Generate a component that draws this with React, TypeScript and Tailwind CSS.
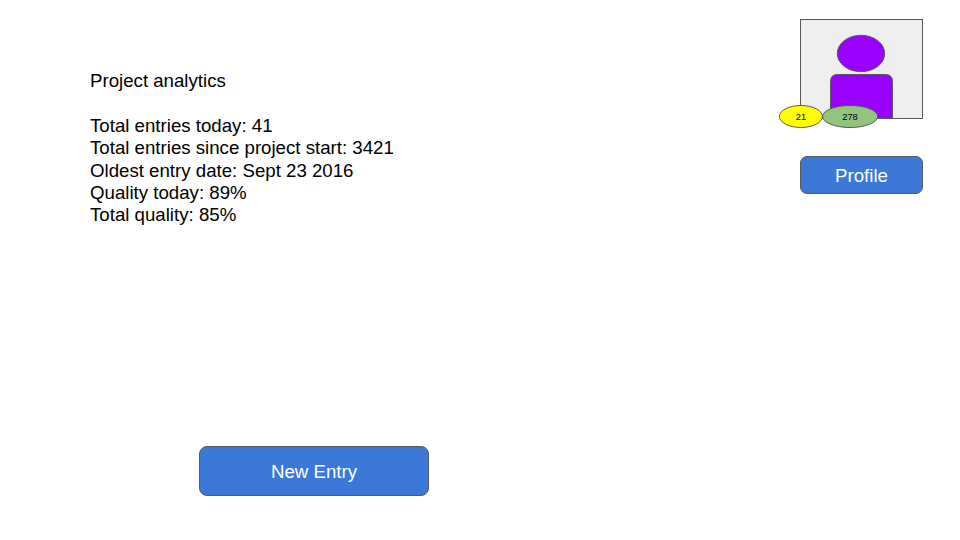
const stats = [
  "Total entries today: 41",
  "Total entries since project start: 3421",
  "Oldest entry date: Sept 23 2016",
  "Quality today: 89%",
  "Total quality: 85%",
];

function Avatar() {
  return (
    <div className="relative h-[100px] w-[123px] border border-[#595959] bg-[#eeeeee]">
      <svg className="absolute -left-[22px] -top-px" width="145" height="112" viewBox="0 0 145 112" stroke="#595959" strokeWidth="1">
        <ellipse cx="82" cy="34.5" rx="23.7" ry="18.2" fill="#9900ff" />
        <path d="M51.5 99.5V62.5Q51.5 55.5 58.5 55.5H106.5Q113.5 55.5 113.5 62.5V99.5Z" fill="#9900ff" />
        <ellipse cx="21.9" cy="97.5" rx="21.5" ry="11" fill="#ffff00" />
        <ellipse cx="71.1" cy="97.5" rx="27.5" ry="11" fill="#93c47d" />
      </svg>
      <span className="absolute left-[-22px] top-[91px] w-11 text-center text-[9.33px] leading-3">21</span>
      <span className="absolute left-[21px] top-[91px] w-14 text-center text-[9.33px] leading-3">278</span>
    </div>
  );
}

export default function App() {
  return (
    <main className="flex h-[540px] w-[960px] justify-between overflow-hidden bg-white font-['Liberation_Sans',Arial,sans-serif] text-[18.67px] text-black">
      <section className="flex flex-col pl-[90px] pt-[70px] leading-[22.4px]">
        <h1>Project analytics</h1>
        <ul className="mt-[22.4px]">
          {stats.map((stat) => (
            <li key={stat}>{stat}</li>
          ))}
        </ul>
        <button className="ml-[109px] mt-[219px] h-[50px] w-[230px] rounded-[8px] border border-[#595959] bg-[#3c78d8] pt-0.5 text-white">
          New Entry
        </button>
      </section>
      <aside className="flex flex-col pr-[37px] pt-[19px]">
        <Avatar />
        <button className="mt-[37px] h-[38px] w-[123px] rounded-[7px] border border-[#595959] bg-[#3c78d8] pt-px text-white">
          Profile
        </button>
      </aside>
    </main>
  );
}
